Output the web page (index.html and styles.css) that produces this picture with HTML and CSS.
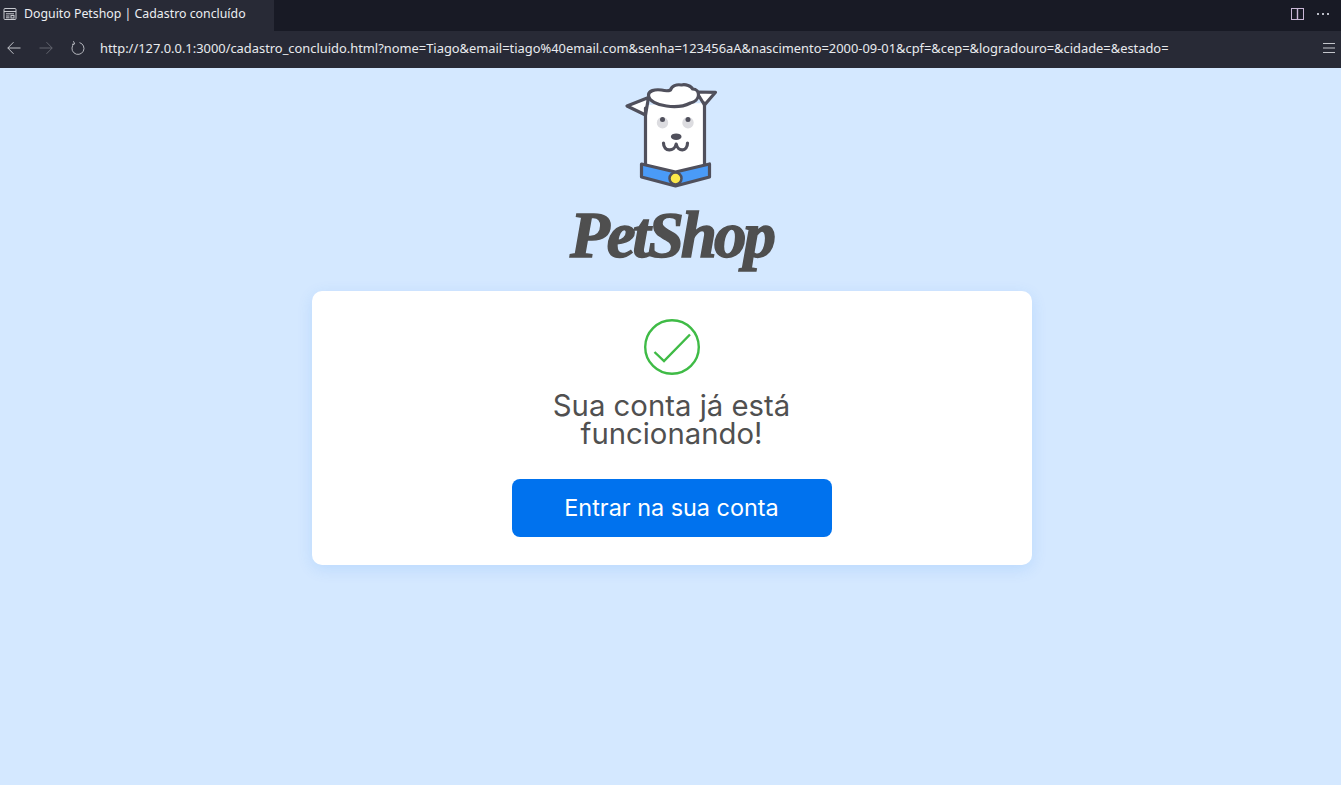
FILE: index.html
```html
<!DOCTYPE html>
<html lang="pt-BR">
<head>
<meta charset="utf-8">
<title>Doguito Petshop | Cadastro concluído</title>
<link rel="stylesheet" href="styles.css">
</head>
<body>
<header class="chrome">
  <div class="tabbar">
    <div class="tab">
      <svg class="tab-icon" width="14" height="14" viewBox="0 0 14 14" fill="none" stroke="#c8cad0" stroke-width="1">
        <rect x="1" y="1.5" width="12" height="11" rx="1"/>
        <path d="M1 4.5h12M3 6.8h8M3 9h3.5M3 10.8h3.5"/>
        <rect x="8" y="8.5" width="3" height="2.5"/>
      </svg>
      <span class="tab-title">Doguito Petshop | Cadastro concluído</span>
    </div>
    <div class="tab-actions">
      <svg width="14" height="14" viewBox="0 0 14 14" fill="none">
        <rect x="0.5" y="1.5" width="12" height="11" stroke="#c9b7d6" stroke-width="1"/>
        <path d="M6.5 1.5v11" stroke="#c9b7d6" stroke-width="1.4"/>
      </svg>
      <svg width="14" height="14" viewBox="0 0 14 14" fill="#b9bcc6">
        <rect x="1" y="6" width="2" height="2"/><rect x="6" y="6" width="2" height="2"/><rect x="11" y="6" width="2" height="2"/>
      </svg>
    </div>
  </div>
  <nav class="navbar">
    <svg class="nav-icon" width="16" height="16" viewBox="0 0 16 16" fill="none" stroke="#c2c4ca" stroke-width="1"><path d="M14.5 8H1.8M7.5 2.2 1.8 8l5.7 5.8"/></svg>
    <svg class="nav-icon" width="16" height="16" viewBox="0 0 16 16" fill="none" stroke="#62646e" stroke-width="1"><path d="M1.5 8h12.7M8.5 2.2 14.2 8l-5.7 5.8"/></svg>
    <svg class="nav-icon" width="16" height="16" viewBox="0 0 16 16" fill="none" stroke="#b4b6bd" stroke-width="1"><path d="M9.5 2.6a6 6 0 1 1-5 .9M3.4 1.2l1.3 2.6-2.7.6"/></svg>
    <span class="url">http://127.0.0.1:3000/cadastro_concluido.html?nome=Tiago&amp;email=tiago%40email.com&amp;senha=123456aA&amp;nascimento=2000-09-01&amp;cpf=&amp;cep=&amp;logradouro=&amp;cidade=&amp;estado=</span>
    <svg class="menu-icon" width="14" height="12" viewBox="0 0 14 12" stroke="#c4c6cc" stroke-width="1"><path d="M1 1.5h12M1 6h12M1 10.5h12"/></svg>
  </nav>
</header>
<main class="page">
  <div class="logo">
    <svg class="dog" width="120" height="120" viewBox="0.5 0 120 120" fill="none" stroke-linecap="round" stroke-linejoin="round">
      <path d="M35 30V90L65 97 94 90V28z" fill="#fff"/>
      <path d="M38 22.5 16.5 31 35 40zM86 17 105 17.3 94 30z" fill="#fff" stroke="#50505c" stroke-width="3.2"/>
      <path d="M35 33V90M94 28V90" stroke="#50505c" stroke-width="3.2"/>
      <circle cx="52" cy="47.7" r="5.7" fill="#dcdce0"/><circle cx="77.5" cy="47.7" r="5.7" fill="#dcdce0"/>
      <circle cx="52" cy="44.5" r="2.5" fill="#50505c"/><circle cx="77.5" cy="44.5" r="2.5" fill="#50505c"/>
      <ellipse cx="65.7" cy="61.7" rx="5.3" ry="3.3" fill="#50505c"/>
      <path d="M53 68c0 9 11 9 12.7 1 1.7 8 11.3 8 11.3-1" stroke="#50505c" stroke-width="3.2"/>
      <path d="M38 20c0-4 6-6 13-5 4 1 7 1 9 0 1-4 6-6 11-5 4-1 10 1 11 4 4 0 6 3 6 6 0 4-4 7-8 8-8 4-18 4-24 3-9-1-18-5-18-11z" fill="#fff" stroke="#50505c" stroke-width="3.2"/>
      <path d="M31 89 65 97 99 89V102L65 111 31 102z" fill="#4a9bf8" stroke="#50505c" stroke-width="3.2"/>
      <circle cx="65" cy="103.5" r="6" fill="#fbe84a" stroke="#50505c" stroke-width="2.5"/>
    </svg>
    <div class="brand">PetShop</div>
  </div>
  <section class="card">
    <svg class="check" width="56" height="56" viewBox="0 0 56 56" fill="none" stroke="#3fbb46" stroke-width="2.4">
      <circle cx="28" cy="28" r="26.8"/>
      <path d="M10.5 33 20 42 46 15.5"/>
    </svg>
    <h1 class="title">Sua conta já está<br>funcionando!</h1>
    <a class="btn" href="#">Entrar na sua conta</a>
  </section>
</main>
</body>
</html>
```
FILE: styles.css
```css
* { box-sizing: border-box; }
html, body { margin: 0; height: 100%; }
body {
  background: #d4e8ff;
  font-family: "Noto Sans", sans-serif;
  display: flex;
  flex-direction: column;
  overflow: hidden;
}
.chrome { flex: none; }
.tabbar {
  height: 31px;
  background: #181a25;
  display: flex;
  justify-content: space-between;
  align-items: stretch;
}
.tab {
  width: 274px;
  background: #282a36;
  display: flex;
  align-items: center;
  gap: 7px;
  padding-left: 3px;
  padding-bottom: 4px;
  color: #eceef2;
  font-size: 12.33px;
}
.tab-icon { flex: none; }
.tab-actions {
  display: flex;
  align-items: center;
  gap: 11px;
  padding-right: 11px;
  padding-bottom: 3px;
}
.navbar {
  height: 37px;
  background: #282a36;
  display: flex;
  align-items: center;
  padding-left: 6px;
  padding-right: 5px;
  padding-bottom: 4px;
  gap: 16px;
}
.nav-icon { flex: none; }
.url {
  color: #e8eaee;
  font-size: 12.89px;
  margin-left: -2px;
  white-space: nowrap;
  flex: 1;
}
.menu-icon { flex: none; }
.page {
  flex: 1;
  display: flex;
  flex-direction: column;
  align-items: center;
  padding-top: 7px;
  padding-left: 2px;
}
.logo {
  display: flex;
  flex-direction: column;
  align-items: center;
  height: 216px;
}
.dog { display: block; flex: none; }
.brand {
  font-family: "Liberation Serif", serif;
  font-style: italic;
  font-weight: 700;
  font-size: 65px;
  letter-spacing: -3px;
  line-height: 72px;
  color: #4f4f4f;
  -webkit-text-stroke: 1.5px #4f4f4f;
  margin-top: 4px;
}
.card {
  width: 720px;
  height: 274px;
  background: #fff;
  border-radius: 10px;
  box-shadow: 0 4px 16px rgba(0, 114, 238, 0.12);
  display: flex;
  flex-direction: column;
  align-items: center;
  padding-top: 28px;
}
.check { display: block; flex: none; }
.title {
  margin: 17px 0 31px;
  font-family: "Inter", sans-serif;
  font-weight: 400;
  font-size: 29.3px;
  line-height: 28px;
  color: #505050;
  text-align: center;
}
.btn {
  width: 320px;
  height: 58px;
  border-radius: 8px;
  padding-bottom: 2px;
  background: #0072ee;
  color: #fff;
  font-family: "Inter", sans-serif;
  font-size: 23.4px;
  text-decoration: none;
  display: flex;
  align-items: center;
  justify-content: center;
}
```
